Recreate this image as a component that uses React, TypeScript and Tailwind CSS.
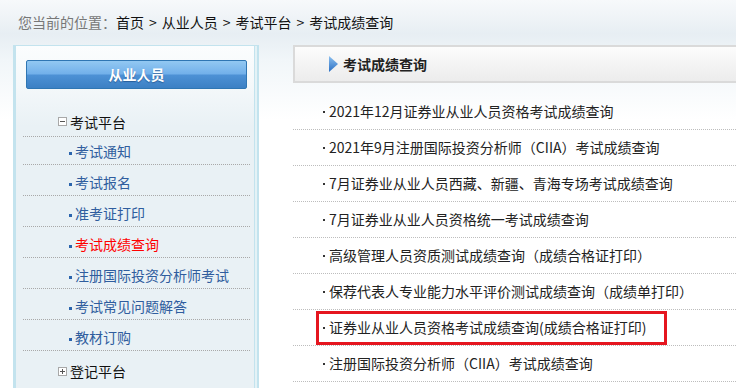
import React from "react";

const font = { fontFamily: '"Noto Sans CJK SC", "Noto Sans", sans-serif' };

// Left menu sub items
const subItems = [
  { label: "考试通知" },
  { label: "考试报名" },
  { label: "准考证打印" },
  { label: "考试成绩查询", active: true },
  { label: "注册国际投资分析师考试" },
  { label: "考试常见问题解答" },
  { label: "教材订购" },
];

// Right list rows
const results = [
  { label: "2021年12月证券业从业人员资格考试成绩查询" },
  { label: "2021年9月注册国际投资分析师（CIIA）考试成绩查询" },
  { label: "7月证券业从业人员西藏、新疆、青海专场考试成绩查询" },
  { label: "7月证券业从业人员资格统一考试成绩查询" },
  { label: "高级管理人员资质测试成绩查询（成绩合格证打印）" },
  { label: "保荐代表人专业能力水平评价测试成绩查询（成绩单打印）" },
  { label: "证券业从业人员资格考试成绩查询(成绩合格证打印)", marked: true },
  { label: "注册国际投资分析师（CIIA）考试成绩查询" },
];

const crumbs = ["首页", "从业人员", "考试平台", "考试成绩查询"];

function ToggleBox({ open }: { open: boolean }) {
  return (
    <span className="relative inline-block w-[9px] h-[9px] border border-[#a8a8a8] bg-white mr-[3px]">
      <span className="absolute left-[1px] top-[3px] w-[5px] h-[1px] bg-[#555]" />
      {!open && <span className="absolute left-[3px] top-[1px] w-[1px] h-[5px] bg-[#555]" />}
    </span>
  );
}

function Sidebar() {
  return (
    <aside className="ml-[13px] w-[246px] shrink-0 border-l-[3px] border-r-[2px] border-t border-[#c3e3ee] shadow-[inset_-2px_0_0_#e4f2f6,inset_-3px_0_0_#c3e3ee] bg-[linear-gradient(to_bottom,#fbfdfe_0px,#f4f8fa_40px,#e9f1f5_80px,#e9f1f5_100%)]">
      <div className="pt-[14px] px-[10px]">
        <div className="h-[29px] rounded-[2px] border border-[#2f76b3] bg-[linear-gradient(to_bottom,#92c8f2_0%,#72b0ea_48%,#4d91d5_52%,#3c80c4_100%)] flex items-center justify-center text-white text-[14px] font-bold [text-shadow:0_1px_1px_rgba(0,40,90,0.45)]">
          从业人员
        </div>
      </div>
      <div className="mt-[18px] mx-[7px]">
        <div className="h-[30px] flex items-center pl-[35px] border-b border-dotted border-[#a9a9a9] text-[14px] text-[#111] leading-[20px]">
          <ToggleBox open />
          考试平台
        </div>
        {subItems.map((item, i) => (
          <div
            key={item.label}
            className={`${i === 0 ? "h-[28px]" : "h-[31px]"} flex items-end pb-[3px] pl-[46px] border-b border-dotted border-[#a9a9a9] text-[14px] leading-[20px]`}
          >
            <span className="inline-block w-[3px] h-[3px] bg-[#2b64ad] mr-[3px] mb-[6px]" />
            <span className={item.active ? "text-[#ff0000]" : "text-[#2f5d9e]"}>{item.label}</span>
          </div>
        ))}
        <div className="h-[40px] flex items-center pl-[35px] text-[14px] text-[#111] leading-[20px]">
          <ToggleBox open={false} />
          登记平台
        </div>
      </div>
    </aside>
  );
}

function Results() {
  return (
    <section className="ml-[34px] flex-1 min-w-0">
      <div className="h-[38px] border-2 border-r-0 border-[#dadada] bg-[linear-gradient(to_bottom,#fcfcfc,#ececec)] flex items-center pl-[34px]">
        <svg width="10" height="16" viewBox="0 0 10 16" className="mr-[4px]">
          <defs>
            <linearGradient id="tri" x1="0" y1="0" x2="0" y2="1">
              <stop offset="0" stopColor="#8cc0ef" />
              <stop offset="1" stopColor="#2a6fc4" />
            </linearGradient>
          </defs>
          <path d="M0 0 L9 8 L0 16 Z" fill="url(#tri)" />
        </svg>
        <span className="text-[14px] font-bold text-[#222]">考试成绩查询</span>
      </div>
      <ul className="mt-[11px]">
        {results.map((r) => (
          <li
            key={r.label}
            className="relative h-[36px] flex items-center pl-[30px] border-b border-dotted border-[#bdbdbd] text-[14px] text-[#222] whitespace-nowrap"
          >
            <span className="inline-block w-[2px] h-[2px] bg-[#333] mr-[4px]" />
            {r.label}
            {r.marked && (
              <span className="absolute left-[23px] top-[1px] w-[351px] h-[34px] border-[3px] border-[#e5161f]" />
            )}
          </li>
        ))}
      </ul>
    </section>
  );
}

export default function App() {
  return (
    <div
      className="w-[736px] h-[388px] overflow-hidden bg-[linear-gradient(to_bottom,#f7f9fb_0px,#e7eef3_34px,#f1f6f9_60px,#ffffff_120px)]"
      style={font}
    >
      <div className="h-[45px] pl-[18px] pt-[12px] flex text-[14px] leading-[20px] text-[#111] whitespace-nowrap">
        <span className="text-[#777]">您当前的位置：</span>
        {crumbs.map((c, i) => (
          <React.Fragment key={c}>
            {i > 0 && <span className="px-[5px]">&gt;</span>}
            <span>{c}</span>
          </React.Fragment>
        ))}
      </div>
      <div className="flex">
        <Sidebar />
        <Results />
      </div>
    </div>
  );
}
